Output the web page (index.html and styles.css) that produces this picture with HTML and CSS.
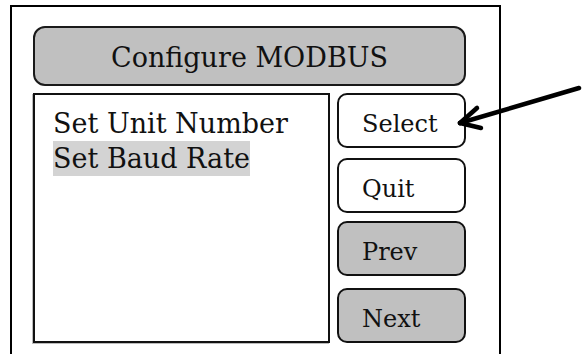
FILE: index.html
```html
<!DOCTYPE html>
<html>
<head>
<meta charset="utf-8">
<link rel="stylesheet" href="styles.css">
</head>
<body>
<div class="frame">
  <div class="title">Configure MODBUS</div>
  <div class="row">
    <div class="list">
      <div class="item">Set Unit Number</div>
      <div class="item selected">Set Baud Rate</div>
    </div>
    <div class="buttons">
      <div class="btn">Select</div>
      <div class="btn quit">Quit</div>
      <div class="btn gray prev">Prev</div>
      <div class="btn gray next">Next</div>
    </div>
  </div>
</div>
<svg class="arrow" width="582" height="354" viewBox="0 0 582 354">
  <g stroke="#000" stroke-width="4.5" stroke-linecap="round" fill="none">
    <line x1="579" y1="88" x2="460" y2="123"/>
    <line x1="460" y1="123" x2="477" y2="108"/>
    <line x1="460" y1="123" x2="481" y2="128"/>
  </g>
</svg>
</body>
</html>
```
FILE: styles.css
```css
html, body {
  margin: 0;
  padding: 0;
  background: #fff;
  overflow: hidden;
}
body {
  width: 582px;
  height: 354px;
  position: relative;
  font-family: "DejaVu Serif", serif;
  color: #111;
}
.frame {
  box-sizing: border-box;
  margin: 5px 0 0 10px;
  width: 491px;
  height: 349px;
  border: 2px solid #000;
  border-bottom: none;
  padding: 19px 0 0 21px;
}
.title {
  box-sizing: border-box;
  width: 433px;
  height: 60px;
  background: #c0c0c0;
  border: 2px solid #1a1a1a;
  border-radius: 12px;
  display: flex;
  align-items: center;
  justify-content: center;
  padding-top: 2px;
  font-size: 27px;
}
.row {
  display: flex;
  gap: 7px;
  margin-top: 7px;
}
.list {
  box-sizing: border-box;
  width: 297px;
  height: 250px;
  border: 2px solid #111;
  box-shadow: -1px 1px 0 #bbb;
  padding: 11px 0 0 18px;
  font-size: 27px;
  line-height: 35px;
}
.item {
  width: fit-content;
}
.selected {
  background: #d3d3d3;
}
.buttons {
  display: flex;
  flex-direction: column;
  width: 129px;
}
.btn {
  box-sizing: border-box;
  height: 55px;
  border: 2px solid #111;
  border-radius: 10px;
  background: #fff;
  font-size: 24px;
  line-height: 43px;
  padding: 8px 0 0 23px;
}
.btn.gray {
  background: #c0c0c0;
}
.quit { margin-top: 10px; }
.prev { margin-top: 8px; }
.next { margin-top: 12px; }
.arrow {
  position: absolute;
  left: 0;
  top: 0;
  pointer-events: none;
}
```
